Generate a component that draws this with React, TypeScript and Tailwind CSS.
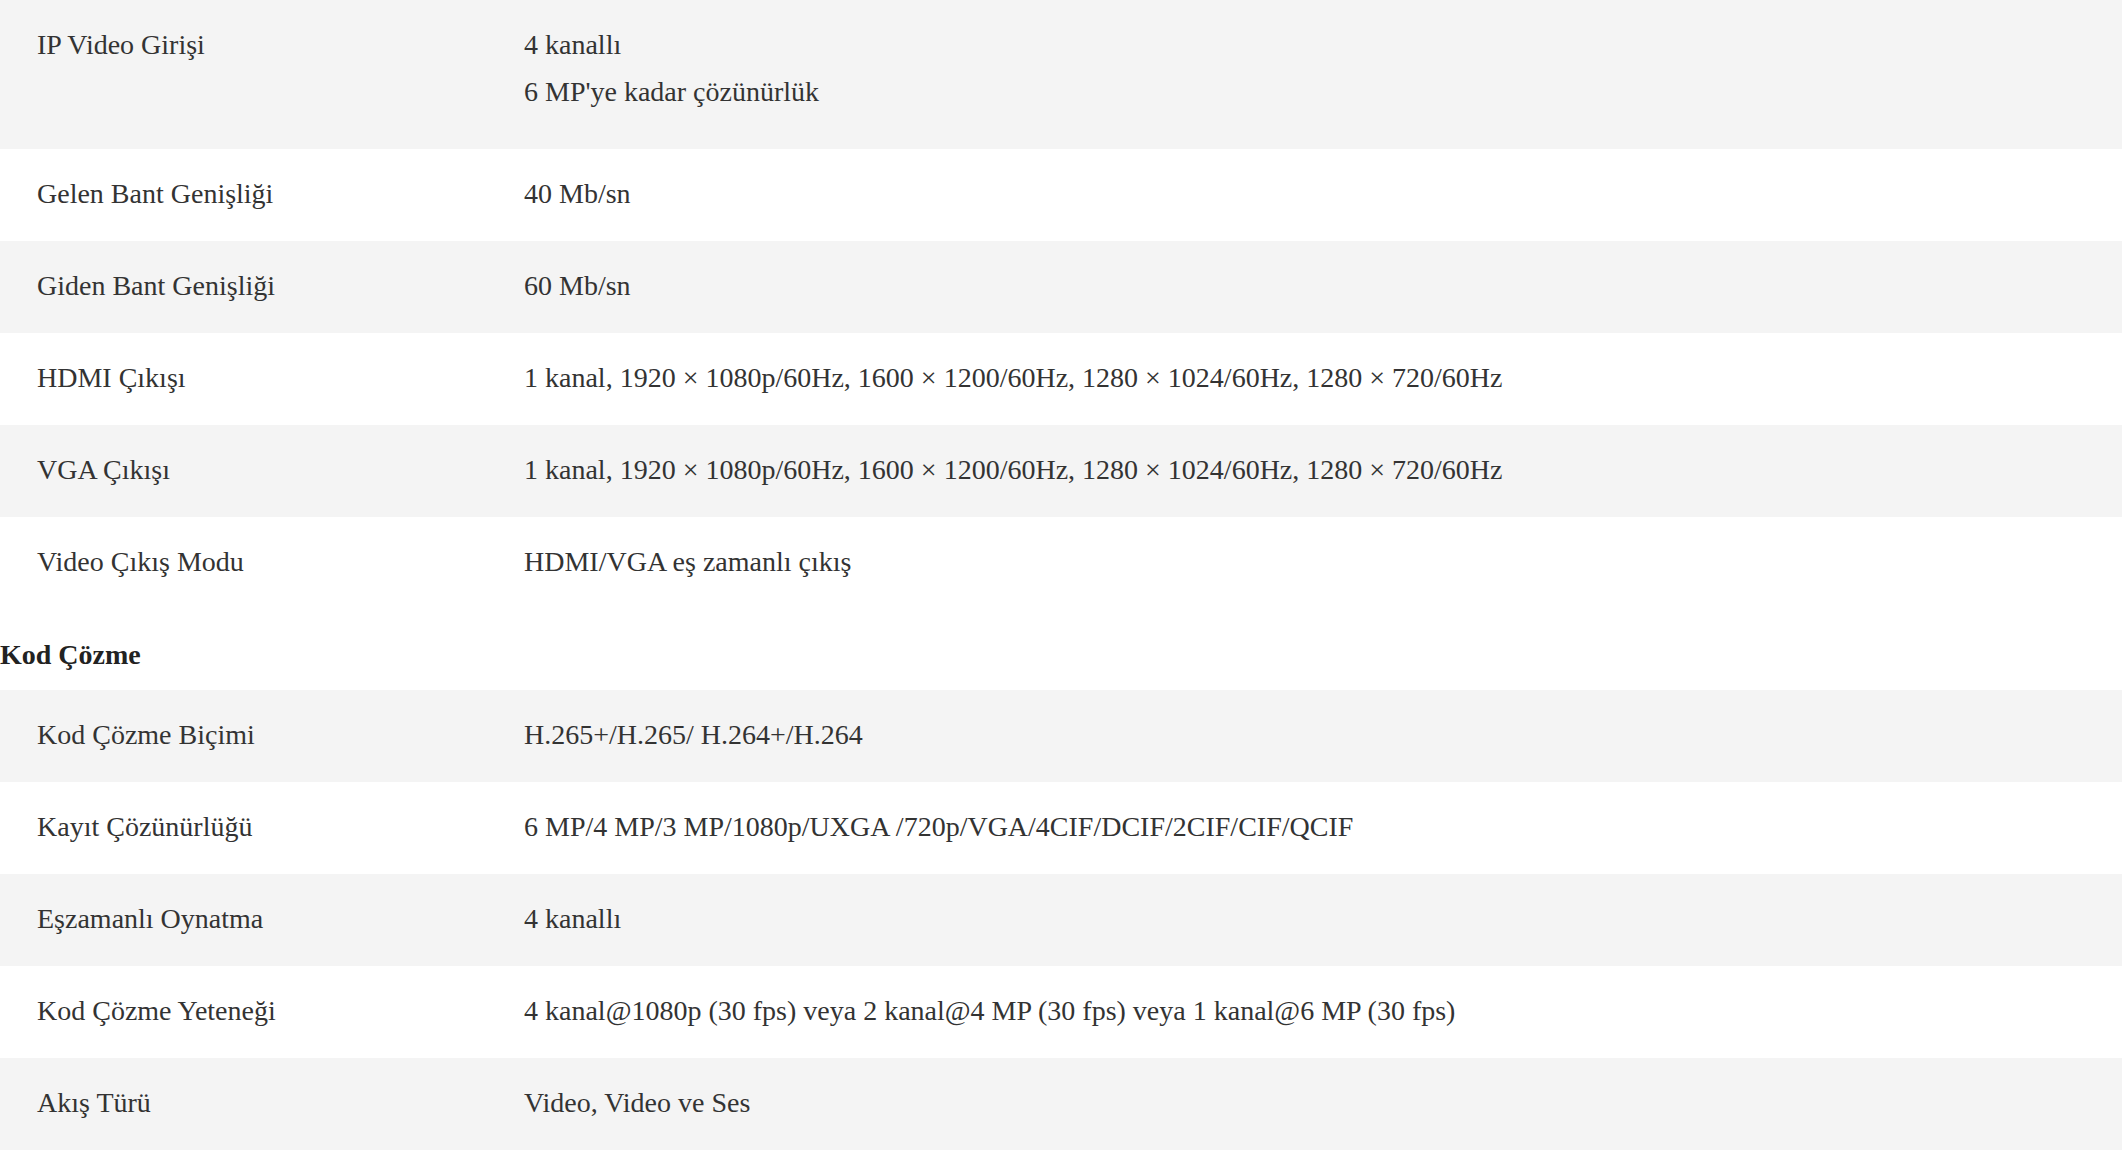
type Spec = { label: string; value: string[] }

const video: Spec[] = [
  { label: "IP Video Girişi", value: ["4 kanallı", "6 MP'ye kadar çözünürlük"] },
  { label: "Gelen Bant Genişliği", value: ["40 Mb/sn"] },
  { label: "Giden Bant Genişliği", value: ["60 Mb/sn"] },
  {
    label: "HDMI Çıkışı",
    value: ["1 kanal, 1920 × 1080p/60Hz, 1600 × 1200/60Hz, 1280 × 1024/60Hz, 1280 × 720/60Hz"],
  },
  {
    label: "VGA Çıkışı",
    value: ["1 kanal, 1920 × 1080p/60Hz, 1600 × 1200/60Hz, 1280 × 1024/60Hz, 1280 × 720/60Hz"],
  },
  { label: "Video Çıkış Modu", value: ["HDMI/VGA eş zamanlı çıkış"] },
]

const decoding: Spec[] = [
  { label: "Kod Çözme Biçimi", value: ["H.265+/H.265/ H.264+/H.264"] },
  { label: "Kayıt Çözünürlüğü", value: ["6 MP/4 MP/3 MP/1080p/UXGA /720p/VGA/4CIF/DCIF/2CIF/CIF/QCIF"] },
  { label: "Eşzamanlı Oynatma", value: ["4 kanallı"] },
  {
    label: "Kod Çözme Yeteneği",
    value: ["4 kanal@1080p (30 fps) veya 2 kanal@4 MP (30 fps) veya 1 kanal@6 MP (30 fps)"],
  },
  { label: "Akış Türü", value: ["Video, Video ve Ses"] },
]

function Row({ spec, shaded }: { spec: Spec; shaded: boolean }) {
  const multi = spec.value.length > 1
  return (
    <div className={`flex pt-[21px] ${multi ? "pb-[34px]" : "pb-[24px]"} ${shaded ? "bg-[#f4f4f4]" : "bg-white"}`}>
      <div className="w-[524px] shrink-0 pl-[37px]">{spec.label}</div>
      <div className="flex-1">
        {spec.value.map((line) => (
          <p key={line}>{line}</p>
        ))}
      </div>
    </div>
  )
}

export default function App() {
  return (
    <div
      className="min-h-screen bg-white text-[28px] leading-[47px] text-[#333]"
      style={{ fontFamily: '"Liberation Serif", "Times New Roman", serif' }}
    >
      {video.map((spec, i) => (
        <Row key={spec.label} spec={spec} shaded={i % 2 === 0} />
      ))}
      <h3 className="pt-[22px] pb-[12px] font-bold text-[#222]">Kod Çözme</h3>
      {decoding.map((spec, i) => (
        <Row key={spec.label} spec={spec} shaded={i % 2 === 0} />
      ))}
    </div>
  )
}
